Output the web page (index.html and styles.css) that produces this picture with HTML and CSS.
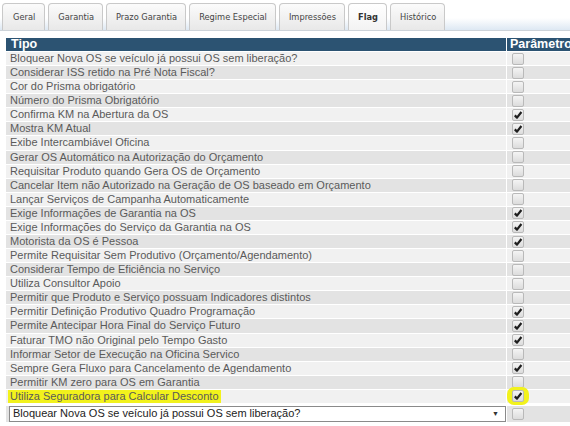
FILE: index.html
```html
<!DOCTYPE html>
<html lang="pt-BR">
<head>
<meta charset="utf-8">
<title>Flag</title>
<link rel="stylesheet" href="styles.css">
</head>
<body>
<div class="tabbar">
  <div class="tab">Geral</div>
  <div class="tab">Garantia</div>
  <div class="tab">Prazo Garantia</div>
  <div class="tab">Regime Especial</div>
  <div class="tab">Impressões</div>
  <div class="tab active">Flag</div>
  <div class="tab">Histórico</div>
</div>
<div class="list">
  <div class="row head"><div class="c1">Tipo</div><div class="c2">Parâmetro</div></div>
  <div class="row"><div class="c1">Bloquear Nova OS se veículo já possui OS sem liberação?</div><div class="c2"><span class="cb"></span></div></div>
  <div class="row"><div class="c1">Considerar ISS retido na Pré Nota Fiscal?</div><div class="c2"><span class="cb"></span></div></div>
  <div class="row"><div class="c1">Cor do Prisma obrigatório</div><div class="c2"><span class="cb"></span></div></div>
  <div class="row"><div class="c1">Número do Prisma Obrigatório</div><div class="c2"><span class="cb"></span></div></div>
  <div class="row"><div class="c1">Confirma KM na Abertura da OS</div><div class="c2"><span class="cb on"><svg viewBox="0 0 10 10"><path d="M1.8 5.4 L4 7.6 L8.4 2" /></svg></span></div></div>
  <div class="row"><div class="c1">Mostra KM Atual</div><div class="c2"><span class="cb on"><svg viewBox="0 0 10 10"><path d="M1.8 5.4 L4 7.6 L8.4 2" /></svg></span></div></div>
  <div class="row"><div class="c1">Exibe Intercambiável Oficina</div><div class="c2"><span class="cb"></span></div></div>
  <div class="row"><div class="c1">Gerar OS Automático na Autorização do Orçamento</div><div class="c2"><span class="cb"></span></div></div>
  <div class="row"><div class="c1">Requisitar Produto quando Gera OS de Orçamento</div><div class="c2"><span class="cb"></span></div></div>
  <div class="row"><div class="c1">Cancelar Item não Autorizado na Geração de OS baseado em Orçamento</div><div class="c2"><span class="cb"></span></div></div>
  <div class="row"><div class="c1">Lançar Serviços de Campanha Automaticamente</div><div class="c2"><span class="cb"></span></div></div>
  <div class="row"><div class="c1">Exige Informações de Garantia na OS</div><div class="c2"><span class="cb on"><svg viewBox="0 0 10 10"><path d="M1.8 5.4 L4 7.6 L8.4 2" /></svg></span></div></div>
  <div class="row"><div class="c1">Exige Informações do Serviço da Garantia na OS</div><div class="c2"><span class="cb on"><svg viewBox="0 0 10 10"><path d="M1.8 5.4 L4 7.6 L8.4 2" /></svg></span></div></div>
  <div class="row"><div class="c1">Motorista da OS é Pessoa</div><div class="c2"><span class="cb on"><svg viewBox="0 0 10 10"><path d="M1.8 5.4 L4 7.6 L8.4 2" /></svg></span></div></div>
  <div class="row"><div class="c1">Permite Requisitar Sem Produtivo (Orçamento/Agendamento)</div><div class="c2"><span class="cb"></span></div></div>
  <div class="row"><div class="c1">Considerar Tempo de Eficiência no Serviço</div><div class="c2"><span class="cb"></span></div></div>
  <div class="row"><div class="c1">Utiliza Consultor Apoio</div><div class="c2"><span class="cb"></span></div></div>
  <div class="row"><div class="c1">Permitir que Produto e Serviço possuam Indicadores distintos</div><div class="c2"><span class="cb"></span></div></div>
  <div class="row"><div class="c1">Permitir Definição Produtivo Quadro Programação</div><div class="c2"><span class="cb on"><svg viewBox="0 0 10 10"><path d="M1.8 5.4 L4 7.6 L8.4 2" /></svg></span></div></div>
  <div class="row"><div class="c1">Permite Antecipar Hora Final do Serviço Futuro</div><div class="c2"><span class="cb on"><svg viewBox="0 0 10 10"><path d="M1.8 5.4 L4 7.6 L8.4 2" /></svg></span></div></div>
  <div class="row"><div class="c1">Faturar TMO não Original pelo Tempo Gasto</div><div class="c2"><span class="cb on"><svg viewBox="0 0 10 10"><path d="M1.8 5.4 L4 7.6 L8.4 2" /></svg></span></div></div>
  <div class="row"><div class="c1">Informar Setor de Execução na Oficina Servico</div><div class="c2"><span class="cb"></span></div></div>
  <div class="row"><div class="c1">Sempre Gera Fluxo para Cancelamento de Agendamento</div><div class="c2"><span class="cb on"><svg viewBox="0 0 10 10"><path d="M1.8 5.4 L4 7.6 L8.4 2" /></svg></span></div></div>
  <div class="row"><div class="c1">Permitir KM zero para OS em Garantia</div><div class="c2"><span class="cb"></span></div></div>
  <div class="row"><div class="c1"><span class="mark">Utiliza Seguradora para Calcular Desconto</span></div><div class="c2"><span class="blob"><span class="cb on"><svg viewBox="0 0 10 10"><path d="M1.8 5.4 L4 7.6 L8.4 2" /></svg></span></span></div></div>
  <div class="row selrow"><div class="c1"><div class="select"><span>Bloquear Nova OS se veículo já possui OS sem liberação?</span><span class="arrow">▼</span></div></div><div class="c2"><span class="cb"></span></div></div>
</div>
</body>
</html>
```
FILE: styles.css
```css
html, body {
  margin: 0;
  padding: 0;
  background: #fff;
  overflow: hidden;
}
body {
  width: 570px;
  height: 426px;
  font-family: "Liberation Sans", Arial, sans-serif;
}
.tabbar {
  display: flex;
  gap: 3px;
  height: 31px;
  padding: 3px 0 0 2px;
  box-sizing: border-box;
  background: linear-gradient(to bottom, #ffffff 0%, #ffffff 60%, #dde8f3 100%);
  border-bottom: 1px solid #cdd3d9;
}
.tab {
  display: flex;
  align-items: center;
  padding: 0 8px 2px 9px;
  border: 1px solid #c9c9c9;
  border-bottom: none;
  border-radius: 4px 4px 0 0;
  background: linear-gradient(to bottom, #fbfbfb, #e8e8e8);
  font-family: "DejaVu Sans Condensed", "DejaVu Sans", sans-serif;
  font-size: 9.2px;
  color: #444;
}
.tab:first-child {
  padding: 0 9px 2px 10px;
}
.tab.active {
  background: linear-gradient(to bottom, #ffffff, #f3f3f3);
  font-weight: bold;
  color: #333;
}
.list {
  display: flex;
  flex-direction: column;
  gap: 1px;
  margin: 7px 0 0 6px;
  width: 600px;
}
.row {
  display: flex;
  gap: 1px;
  height: 13.08px;
  font-size: 11px;
  line-height: 13px;
  color: #5a5a5a;
}
.c1 {
  width: 500px;
  flex: none;
  padding-left: 4px;
  box-sizing: border-box;
  white-space: nowrap;
  overflow: hidden;
}
.c2 {
  width: 80px;
  flex: none;
  padding-left: 5px;
  box-sizing: border-box;
  display: flex;
  align-items: center;
  white-space: nowrap;
}
.row:nth-child(even) .c1, .row:nth-child(even) .c2 { background: #f1f1f1; }
.row:nth-child(odd) .c1, .row:nth-child(odd) .c2 { background: #e3e3e3; }
.row.head {
  height: 13px;
}
.row.head .c1, .row.head .c2 {
  background: #2c5372;
  color: #fff;
  font-weight: bold;
  font-size: 12.5px;
  display: block;
}
.row.head .c1 { padding-left: 5px; }
.row.head .c2 { padding-left: 3px; }
.cb {
  display: inline-block;
  width: 10px;
  height: 10px;
  border: 1px solid #b9b9b9;
  border-radius: 2px;
  background: linear-gradient(to bottom, #f4f4f4, #dcdcdc);
}
.cb svg {
  display: block;
  width: 10px;
  height: 10px;
}
.cb svg path {
  fill: none;
  stroke: #1e1e1e;
  stroke-width: 2.2;
  stroke-linejoin: round;
}
.mark {
  background: #f2f21c;
  padding: 1px 2px;
  margin-left: -2px;
}
.blob {
  display: inline-flex;
  align-items: center;
  justify-content: center;
  background: #f2f21c;
  border-radius: 7px;
  padding: 3px 5px;
  margin: -3px -5px;
}
.selrow {
  height: 16px;
  margin-top: 2px;
}
.selrow .c1 {
  padding-left: 3px;
  background: #f1f1f1;
}
.select {
  display: flex;
  justify-content: space-between;
  align-items: center;
  width: 497px;
  height: 16px;
  box-sizing: border-box;
  border: 1px solid #8a8a8a;
  background: #fff;
  color: #222;
  padding: 0 6px 0 3px;
}
.arrow {
  font-size: 7px;
  color: #333;
}
```
